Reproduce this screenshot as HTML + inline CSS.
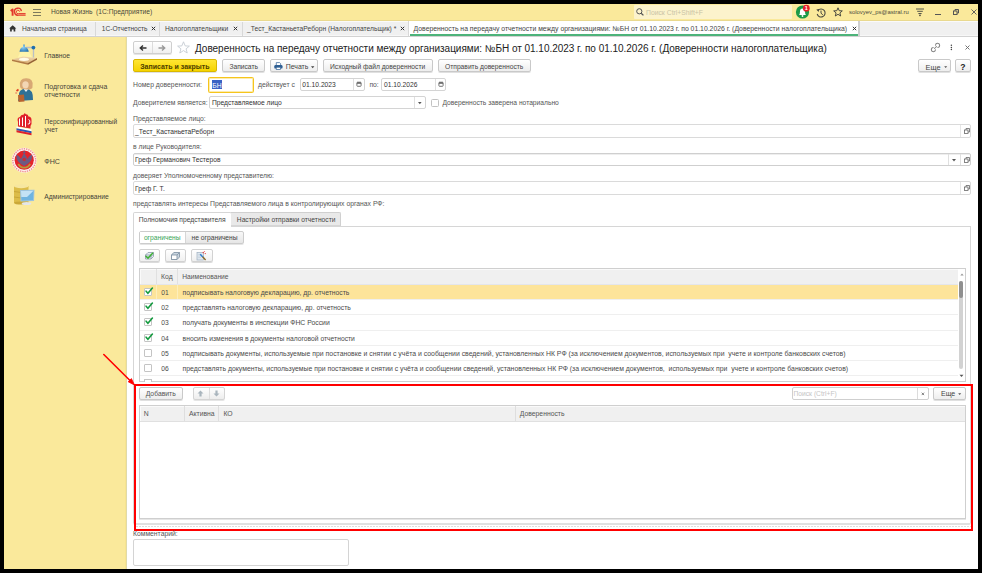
<!DOCTYPE html>
<html><head><meta charset="utf-8">
<style>
*{box-sizing:border-box;margin:0;padding:0}
html,body{width:982px;height:573px;overflow:hidden;background:#000}
body{position:relative;font-family:"Liberation Sans",sans-serif;font-size:6.7px;color:#4a4a4a}
.a{position:absolute}
.t{position:absolute;white-space:pre;line-height:1}
svg{overflow:visible}
</style></head>
<body>
<div class="a" style="left:4px;top:4px;width:974px;height:565px;background:#fff"></div>
<div class="a" style="left:4px;top:4px;width:974px;height:16px;background:#fae99b"></div>
<div class="a" style="left:4px;top:20px;width:974px;height:1px;background:#e9d98f"></div>
<div class="a" style="left:4px;top:21px;width:974px;height:15px;background:#f0f0f0"></div>
<div class="a" style="left:4px;top:21px;width:974px;height:1px;background:#fafafa"></div>
<div class="a" style="left:4px;top:35px;width:974px;height:1px;background:#f7f7f7"></div>
<div class="a" style="left:4px;top:36px;width:974px;height:1px;background:#d2d2d2"></div>
<div class="a" style="left:4px;top:37px;width:122px;height:532px;background:#fae99b"></div>
<div class="a" style="left:125px;top:37px;width:1px;height:532px;background:#f8e48e"></div>
<div class="a" style="left:126px;top:37px;width:1px;height:532px;background:#e0daa8"></div>
<svg class="a" style="left:10px;top:7px;" width="17" height="10" viewBox="0 0 17 10"><g fill="none" stroke="#e3372c" stroke-linecap="butt"><path d="M0.7 4 L2.6 2.4 V8.8" stroke-width="1.9" stroke-linejoin="round"/><path d="M11.4 4.2 A3.5 3.5 0 1 0 8.4 8.2 H15.6" stroke-width="1.3"/><path d="M9.6 4.6 A1.7 1.7 0 1 0 8.4 6.6 H15.6" stroke-width="1.0"/></g></svg>
<div class="a" style="left:33px;top:9px;width:8px;height:1px;background:#7d7a5c"></div>
<div class="a" style="left:33px;top:12px;width:8px;height:1px;background:#7d7a5c"></div>
<div class="a" style="left:33px;top:15px;width:8px;height:1px;background:#7d7a5c"></div>
<div class="t" style="left:51.00px;top:9px;font-size:6.7px;color:#4b4a3c;">Новая Жизнь  (1С:Предприятие)</div>
<div class="a" style="left:634px;top:5px;width:158px;height:14px;background:#fcf3cc;border-radius:1px"></div>
<svg class="a" style="left:636px;top:8px;" width="8" height="8" viewBox="0 0 8 8"><circle cx="3.3" cy="3.3" r="2.6" fill="none" stroke="#555" stroke-width="1"/><path d="M5.2 5.2 L7.4 7.4" stroke="#555" stroke-width="1.3"/></svg>
<div class="t" style="left:646.00px;top:10px;font-size:6.8px;color:#c9c3a6;">Поиск Ctrl+Shift+F</div>
<svg class="a" style="left:795px;top:5px;" width="16" height="14" viewBox="0 0 16 14"><circle cx="7.5" cy="7" r="6.6" fill="#1d9a48"/><path d="M4 10 Q5 9 5 6.5 Q5 3.8 7.5 3.6 Q10 3.8 10 6.5 Q10 9 11 10 Z" fill="#fff"/><circle cx="7.5" cy="11" r="0.9" fill="#fff"/><circle cx="11.3" cy="3.2" r="3.4" fill="#e8202a"/><text x="11.3" y="5.4" font-size="5.5" font-weight="bold" text-anchor="middle" fill="#fff" font-family="Liberation Sans">1</text></svg>
<svg class="a" style="left:816px;top:7.5px;" width="10" height="10" viewBox="0 0 10 10"><path d="M1.9 2.6 A4 4 0 1 1 1.2 6" fill="none" stroke="#4a4a40" stroke-width="1.1"/><path d="M0.3 1.6 L2.6 3.9 L3.2 1Z" fill="#4a4a40"/><path d="M5 2.6 V5.2 L6.8 6.8" fill="none" stroke="#4a4a40" stroke-width="1"/></svg>
<svg class="a" style="left:833px;top:7px;" width="10" height="10" viewBox="0 0 10 10"><path d="M5 0.8 L6.2 3.7 L9.3 3.9 L6.9 5.9 L7.7 9 L5 7.3 L2.3 9 L3.1 5.9 L0.7 3.9 L3.8 3.7Z" fill="none" stroke="#4a4a40" stroke-width="1" stroke-linejoin="round"/></svg>
<div class="t" style="left:849.00px;top:10px;font-size:5.9px;color:#4b4a3c;">solovyev_ps@astral.ru</div>
<svg class="a" style="left:915.5px;top:8px;" width="9" height="9" viewBox="0 0 9 9"><path d="M0 1H8M1.2 3.3H6.8M2.4 5.5H5.6" stroke="#555548" stroke-width="1"/><path d="M2.8 6.8 H5.2 L4 8.4Z" fill="#333"/></svg>
<div class="a" style="left:935px;top:14px;width:6px;height:1px;background:#555"></div>
<svg class="a" style="left:953px;top:9px;" width="6" height="6" viewBox="0 0 6 6"><rect x="0.5" y="2" width="3.5" height="3.5" fill="none" stroke="#555" stroke-width="1"/><path d="M2 2 V0.5 H5.5 V4 H4" fill="none" stroke="#555" stroke-width="1"/></svg>
<svg class="a" style="left:970.5px;top:8.5px;" width="6" height="6" viewBox="0 0 6 6"><path d="M0.5 0.5L5.5 5.5M5.5 0.5L0.5 5.5" stroke="#555" stroke-width="0.9"/></svg>
<svg class="a" style="left:9px;top:24.5px;" width="8" height="7" viewBox="0 0 8 7"><path d="M3.7 0.2 L7.3 3.5 H6.3 V6.6 H4.6 V4.6 H2.8 V6.6 H1.1 V3.5 H0.1Z" fill="#333"/></svg>
<div class="t" style="left:22.00px;top:26px;font-size:6.7px;color:#444;">Начальная страница</div>
<div class="a" style="left:95px;top:22px;width:1px;height:14px;background:#d8d8d8"></div>
<div class="t" style="left:101.80px;top:26px;font-size:6.6px;color:#444;">1С-Отчетность</div>
<svg class="a" style="left:151px;top:26px;" width="5" height="5" viewBox="0 0 5 5"><path d="M0.8 0.8L4.2 4.2M4.2 0.8L0.8 4.2" stroke="#333" stroke-width="1"/></svg>
<div class="a" style="left:159px;top:22px;width:1px;height:14px;background:#d8d8d8"></div>
<div class="t" style="left:165.00px;top:26px;font-size:6.7px;color:#444;">Налогоплательщики</div>
<svg class="a" style="left:232.5px;top:26px;" width="5" height="5" viewBox="0 0 5 5"><path d="M0.8 0.8L4.2 4.2M4.2 0.8L0.8 4.2" stroke="#333" stroke-width="1"/></svg>
<div class="a" style="left:242px;top:22px;width:1px;height:14px;background:#d8d8d8"></div>
<div class="t" style="left:247.00px;top:26px;font-size:6.7px;color:#444;">_Тест_КастаньетаРеборн (Налогоплательщик) *</div>
<svg class="a" style="left:400px;top:26px;" width="5" height="5" viewBox="0 0 5 5"><path d="M0.8 0.8L4.2 4.2M4.2 0.8L0.8 4.2" stroke="#333" stroke-width="1"/></svg>
<div class="a" style="left:408px;top:21px;width:1px;height:15px;background:#d8d8d8"></div>
<div class="a" style="left:409px;top:21px;width:449px;height:15px;background:#fff"></div>
<div class="a" style="left:410px;top:34px;width:448px;height:2px;background:#4db37a"></div>
<div class="t" style="left:413.60px;top:26px;font-size:6.83px;color:#444;">Доверенность на передачу отчетности между организациями: №БН от 01.10.2023 г. по 01.10.2026 г. (Доверенности налогоплательщика)</div>
<svg class="a" style="left:851.5px;top:26px;" width="5" height="5" viewBox="0 0 5 5"><path d="M0.8 0.8L4.2 4.2M4.2 0.8L0.8 4.2" stroke="#333" stroke-width="1"/></svg>
<div class="a" style="left:858px;top:21px;width:2px;height:15px;background:#d0d0d0"></div>
<svg class="a" style="left:8px;top:40px;" width="32" height="28" viewBox="0 0 32 28"><defs><linearGradient id="bd" x1="0" y1="0" x2="0" y2="1"><stop offset="0" stop-color="#f1d9b0"/><stop offset="1" stop-color="#d9b07a"/></linearGradient><radialGradient id="sh" cx="0.4" cy="0.4" r="0.7"><stop offset="0" stop-color="#8fd0f5"/><stop offset="1" stop-color="#1f6fae"/></radialGradient></defs><path d="M12.5 11.5 L21 11.5 L24.5 18.5 L9.5 18.5Z" fill="#fff7b0" opacity="0.8"/><path d="M4 19.5 L15 16.5 L29 18 L20 23Z" fill="url(#bd)"/><ellipse cx="16" cy="19.3" rx="5" ry="1.6" fill="#fffbe8"/><path d="M4 19.5 L20 23 L20 24.8 L4 21Z" fill="#b07a45"/><path d="M20 23 L29 18 L29 19.8 L20 24.8Z" fill="#946236"/><path d="M18 7.5 H25.5 V17.5" fill="none" stroke="#b9bfc6" stroke-width="1.3"/><circle cx="25.4" cy="7.6" r="1.9" fill="#1f6fae"/><path d="M11.5 11.8 Q12 7.5 15 7 L15.2 4.8 Q16 3.8 16.8 4.8 L17 7 Q20 7.5 20.8 11.8Z" fill="url(#sh)"/></svg>
<div class="t" style="left:44.30px;top:53px;font-size:6.75px;color:#45443a;">Главное</div>
<svg class="a" style="left:10px;top:74px;" width="30" height="28" viewBox="0 0 30 28"><path d="M9 22 Q8 15 16 14.5 Q23.5 15 23 26 L8 27Z" fill="#2f7196"/><path d="M13.5 14.8 L16 18 L18.5 14.8Z" fill="#eef6fa"/><path d="M10 12 Q9 4 16.5 4.3 Q23.5 4.5 22.5 12 Q23 14.5 21 15 Q19 16 13 15 Q10 14.5 10 12Z" fill="#d8a874"/><ellipse cx="15.5" cy="10.8" rx="3.2" ry="3.6" fill="#f3d6b4"/><path d="M8 21 L14 20.5 L14.5 27.5 L8.5 28Z" fill="#b8632f"/><path d="M6.5 17 L8.5 15.5" stroke="#e23b22" stroke-width="1.6"/><circle cx="6.2" cy="19" r="1.1" fill="#f0a070"/></svg>
<div class="t" style="left:44.30px;top:84px;font-size:6.95px;color:#45443a;">Подготовка и сдача</div>
<div class="t" style="left:44.30px;top:92px;font-size:6.95px;color:#45443a;">отчетности</div>
<svg class="a" style="left:10px;top:110px;" width="30" height="30" viewBox="0 0 30 30"><path d="M8 12 Q6.5 7.5 10 7 Q11 4.5 13.5 4.8 Q14.5 2 15.8 4.2 Q18 4 18.5 6.5 Q21.5 6.5 21.5 10 Q22 14 20.5 16 L20.5 18.5 L8 16.5Z" fill="#e0202a"/><path d="M9.5 8.5 V15.5 M12.5 7.5 V16 M15.5 6 V16.8 M18.5 9.5 Q20.5 10 19.8 13 Q19 14.5 17.8 14" fill="none" stroke="#fff" stroke-width="1"/><path d="M6.5 16.5 L21.5 19.5 L21.5 21.3 L6.5 18.3Z" fill="#fff"/><path d="M6.5 18.3 L21.5 21.3 L21.5 23.2 L6.5 20.2Z" fill="#2a57b6"/><path d="M6.5 20.2 L21.5 23.2 L21.5 25.3 L6.5 22.3Z" fill="#e0202a"/></svg>
<div class="t" style="left:44.60px;top:119px;font-size:6.55px;color:#45443a;">Персонифицированный</div>
<div class="t" style="left:44.60px;top:127px;font-size:6.55px;color:#45443a;">учет</div>
<svg class="a" style="left:8px;top:144px;" width="32" height="32" viewBox="0 0 32 32"><circle cx="16.2" cy="16.2" r="12.4" fill="#fdf3f3"/><circle cx="16.2" cy="16.2" r="11.4" fill="none" stroke="#ef8c8c" stroke-width="1.4" stroke-dasharray="1.4 0.9"/><circle cx="16.2" cy="16.2" r="9.6" fill="#e4242a"/><path d="M8.2 10.5 Q11.5 11.5 13 15 L16.2 8.5 L19.4 15 Q20.9 11.5 24.2 10.5 Q24.2 17.5 19.5 20 L16.2 22 L12.9 20 Q8.2 17.5 8.2 10.5Z" fill="#6d5a82"/><path d="M14.6 9 L16.2 6.6 L17.8 9Z" fill="#6d5a82"/><circle cx="16.2" cy="15.5" r="1.8" fill="#c0303a"/><path d="M10.2 20 Q13 24.5 16.2 23.5 Q19.4 24.5 22.2 20" fill="none" stroke="#b49a3c" stroke-width="1.8"/></svg>
<div class="t" style="left:44.30px;top:159px;font-size:7.1px;color:#45443a;">ФНС</div>
<svg class="a" style="left:8px;top:180px;" width="32" height="30" viewBox="0 0 32 30"><rect x="6" y="6" width="14.5" height="17" fill="#dcbc48"/><ellipse cx="13.2" cy="6.2" rx="7.2" ry="2" fill="#f6e6a0"/><ellipse cx="13.2" cy="23" rx="7.2" ry="1.6" fill="#caa838"/><path d="M6 11.5 Q13 13.5 20.5 11.5 M6 17 Q13 19 20.5 17" stroke="#bf9c30" stroke-width="0.7" fill="none"/><path d="M12 10 L26.5 9.8 L26 21 L12.5 21.5Z" fill="#9fc4dc"/><path d="M13 11 L25.5 10.8 L25 20 L13.5 20.5Z" fill="#6fb4e0"/><path d="M13 11 L25.5 10.8 L19 17 L13.3 17Z" fill="#d8eefa" opacity="0.8"/><ellipse cx="18.5" cy="23.5" rx="4.8" ry="1.6" fill="#e4e6e8"/></svg>
<div class="t" style="left:44.30px;top:194px;font-size:6.75px;color:#45443a;">Администрирование</div>
<div class="a" style="left:133px;top:41px;width:39px;height:13px;background:linear-gradient(#fff,#f0f0f0);border:1px solid #cfcfcf;border-radius:2px;box-shadow:0 1px 0 rgba(0,0,0,0.1)"></div>
<div class="a" style="left:152px;top:42px;width:1px;height:11px;background:#dcdcdc"></div>
<svg class="a" style="left:139px;top:45px;" width="8" height="6" viewBox="0 0 8 6"><path d="M7.5 3H2M4 0.6L1.3 3L4 5.4" fill="none" stroke="#333" stroke-width="1.4"/></svg>
<svg class="a" style="left:158px;top:45px;" width="8" height="6" viewBox="0 0 8 6"><path d="M0.5 3H6M4 0.6L6.7 3L4 5.4" fill="none" stroke="#999" stroke-width="1.4"/></svg>
<svg class="a" style="left:177px;top:41px;" width="13" height="13" viewBox="0 0 13 13"><path d="M6.5 0.8 L8.2 4.9 L12.4 5.1 L9.1 7.8 L10.2 12 L6.5 9.6 L2.8 12 L3.9 7.8 L0.6 5.1 L4.8 4.9Z" fill="none" stroke="#c5ccd3" stroke-width="0.9" stroke-linejoin="round"/></svg>
<div class="t" style="left:195.00px;top:44px;font-size:10px;color:#222;letter-spacing:-0.025px">Доверенность на передачу отчетности между организациями: №БН от 01.10.2023 г. по 01.10.2026 г. (Доверенности налогоплательщика)</div>
<svg class="a" style="left:930px;top:42px;" width="11" height="11" viewBox="0 0 11 11"><g fill="none" stroke="#808080" stroke-width="1.05" stroke-linecap="round"><path d="M5.5 3.2 A2.1 2.1 0 1 1 7.8 5.5"/><path d="M5.5 7.8 A2.1 2.1 0 1 1 3.2 5.5"/><path d="M4.5 6.5 L6.5 4.5"/></g></svg>
<svg class="a" style="left:950px;top:44px;" width="3" height="7" viewBox="0 0 3 7"><circle cx="1.4" cy="1.2" r="0.75" fill="#444"/><circle cx="1.4" cy="3.4" r="0.75" fill="#444"/><circle cx="1.4" cy="5.6" r="0.75" fill="#444"/></svg>
<svg class="a" style="left:965px;top:45px;" width="5" height="5" viewBox="0 0 5 5"><path d="M0.5 0.5L4.5 4.5M4.5 0.5L0.5 4.5" stroke="#666" stroke-width="0.9"/></svg>
<div class="a" style="left:133px;top:59px;width:84px;height:13px;background:linear-gradient(#ffe633,#f5d300);border:1px solid #d9b800;border-radius:2px;box-shadow:0 1px 0 rgba(0,0,0,0.12)"></div>
<div class="t" style="left:140.20px;top:63px;font-size:7.0px;color:#4d4000;font-weight:bold;">Записать и закрыть</div>
<div class="a" style="left:222px;top:59px;width:43px;height:13px;background:linear-gradient(#ffffff,#eeeeee);border:1px solid #c9c9c9;border-radius:2px;box-shadow:0 1px 0 rgba(0,0,0,0.12)"></div>
<div class="t" style="left:229.40px;top:64px;font-size:6.7px;color:#444;">Записать</div>
<div class="a" style="left:270px;top:59px;width:48px;height:13px;background:linear-gradient(#ffffff,#eeeeee);border:1px solid #c9c9c9;border-radius:2px;box-shadow:0 1px 0 rgba(0,0,0,0.12)"></div>
<div class="t" style="left:285.80px;top:64px;font-size:6.9px;color:#444;">Печать</div>
<svg class="a" style="left:274px;top:62px;" width="9" height="8" viewBox="0 0 9 8"><path d="M2.3 3 V0.6 H5.6 L6.6 1.6 V3" fill="#fff" stroke="#2f5f93" stroke-width="0.7"/><rect x="0.3" y="3" width="8.2" height="3.6" rx="1.2" fill="#2f5f93"/><rect x="2.2" y="5.2" width="4.4" height="2.4" fill="#fff" stroke="#2f5f93" stroke-width="0.7"/></svg>
<svg class="a" style="left:311px;top:66px;" width="4" height="3" viewBox="0 0 4 3"><path d="M0 0.2H3.4L1.7 2.2Z" fill="#444"/></svg>
<div class="a" style="left:323px;top:59px;width:110px;height:13px;background:linear-gradient(#ffffff,#eeeeee);border:1px solid #c9c9c9;border-radius:2px;box-shadow:0 1px 0 rgba(0,0,0,0.12)"></div>
<div class="t" style="left:330.00px;top:64px;font-size:6.7px;color:#444;">Исходный файл доверенности</div>
<div class="a" style="left:438px;top:59px;width:93px;height:13px;background:linear-gradient(#ffffff,#eeeeee);border:1px solid #c9c9c9;border-radius:2px;box-shadow:0 1px 0 rgba(0,0,0,0.12)"></div>
<div class="t" style="left:445.00px;top:64px;font-size:6.7px;color:#444;">Отправить доверенность</div>
<div class="a" style="left:918px;top:59px;width:33px;height:13px;background:linear-gradient(#ffffff,#eeeeee);border:1px solid #c9c9c9;border-radius:2px;box-shadow:0 1px 0 rgba(0,0,0,0.12)"></div>
<div class="t" style="left:925.50px;top:64px;font-size:7.4px;color:#444;">Еще</div>
<svg class="a" style="left:944px;top:66px;" width="4" height="3" viewBox="0 0 4 3"><path d="M0.2 0.3H3.2L1.7 2Z" fill="#555"/></svg>
<div class="a" style="left:955px;top:59px;width:16px;height:13px;background:linear-gradient(#ffffff,#eeeeee);border:1px solid #c9c9c9;border-radius:2px;box-shadow:0 1px 0 rgba(0,0,0,0.12)"></div>
<div class="t" style="left:960.20px;top:63px;font-size:8.6px;color:#222;font-weight:bold;">?</div>
<div class="t" style="left:133.00px;top:82px;font-size:6.8px;color:#555;">Номер доверенности:</div>
<div class="a" style="left:208px;top:77px;width:46px;height:16px;background:#fff;border:1px solid #f6c51c;border-radius:1.5px;box-shadow:inset 0 0 0 0.5px #f9d860"></div>
<div class="a" style="left:212px;top:80px;width:10px;height:9px;background:#3a62c4"></div>
<div class="t" style="left:212.20px;top:83px;font-size:6.8px;color:#fff;">БН</div>
<div class="t" style="left:258.00px;top:82px;font-size:6.8px;color:#555;">действует с</div>
<div class="a" style="left:300px;top:78px;width:65px;height:13px;background:#fff;border:1px solid #d4d4d4;border-radius:2px"></div>
<div class="a" style="left:353px;top:79px;width:1px;height:11px;background:#e0e0e0"></div>
<div class="t" style="left:302.30px;top:82px;font-size:6.7px;color:#333;">01.10.2023</div>
<svg class="a" style="left:356px;top:81px;" width="6" height="6" viewBox="0 0 6 6"><rect x="0.9" y="1.4" width="4.2" height="3.9" rx="0.6" fill="#fff" stroke="#666" stroke-width="0.9"/><rect x="0.9" y="1.4" width="4.2" height="1.4" fill="#666"/><path d="M2 0.4V1.4M4 0.4V1.4" stroke="#666" stroke-width="0.6"/></svg>
<div class="t" style="left:369.40px;top:82px;font-size:6.8px;color:#555;">по:</div>
<div class="a" style="left:381px;top:78px;width:65px;height:13px;background:#fff;border:1px solid #d4d4d4;border-radius:2px"></div>
<div class="a" style="left:435px;top:79px;width:1px;height:11px;background:#e0e0e0"></div>
<div class="t" style="left:384.00px;top:82px;font-size:6.7px;color:#333;">01.10.2026</div>
<svg class="a" style="left:438px;top:81px;" width="6" height="6" viewBox="0 0 6 6"><rect x="0.9" y="1.4" width="4.2" height="3.9" rx="0.6" fill="#fff" stroke="#666" stroke-width="0.9"/><rect x="0.9" y="1.4" width="4.2" height="1.4" fill="#666"/><path d="M2 0.4V1.4M4 0.4V1.4" stroke="#666" stroke-width="0.6"/></svg>
<div class="t" style="left:133.00px;top:100px;font-size:6.8px;color:#555;">Доверителем является:</div>
<div class="a" style="left:209px;top:96px;width:217px;height:13px;background:#fff;border:1px solid #d4d4d4;border-radius:2px"></div>
<div class="a" style="left:414px;top:97px;width:1px;height:11px;background:#e0e0e0"></div>
<div class="t" style="left:212.00px;top:100px;font-size:6.7px;color:#333;">Представляемое лицо</div>
<svg class="a" style="left:418px;top:102px;" width="4" height="3" viewBox="0 0 4 3"><path d="M0 0H3.6L1.8 2.2Z" fill="#555"/></svg>
<div class="a" style="left:431px;top:99px;width:8px;height:8px;background:#fff;border:1px solid #c2c2c2;border-radius:1.5px"></div>
<div class="t" style="left:442.40px;top:100px;font-size:6.7px;color:#555;">Доверенность заверена нотариально</div>
<div class="t" style="left:133.00px;top:116px;font-size:6.8px;color:#555;">Представляемое лицо:</div>
<div class="a" style="left:133px;top:124px;width:838px;height:14px;background:#fff;border:1px solid #dadada;border-radius:2px"></div>
<div class="a" style="left:960px;top:125px;width:1px;height:12px;background:#e6e6e6"></div>
<div class="t" style="left:135.00px;top:129px;font-size:6.7px;color:#333;">_Тест_КастаньетаРеборн</div>
<svg class="a" style="left:963.5px;top:127.5px;" width="6" height="6" viewBox="0 0 6 6"><rect x="0.5" y="2" width="3.5" height="3.5" fill="none" stroke="#666" stroke-width="0.8"/><path d="M2 2 V0.5 H5.5 V4 H4" fill="none" stroke="#666" stroke-width="0.8"/></svg>
<div class="t" style="left:133.00px;top:144px;font-size:6.8px;color:#555;">в лице Руководителя:</div>
<div class="a" style="left:133px;top:153px;width:838px;height:13px;background:#fff;border:1px solid #cfcfcf;border-radius:2px;box-shadow:inset 0 1px 0 #eee"></div>
<div class="a" style="left:948px;top:154px;width:1px;height:11px;background:#e0e0e0"></div>
<div class="a" style="left:960px;top:154px;width:1px;height:11px;background:#e0e0e0"></div>
<div class="t" style="left:135.00px;top:157px;font-size:6.7px;color:#333;">Греф Германович Тестеров</div>
<svg class="a" style="left:952px;top:159px;" width="5" height="3" viewBox="0 0 5 3"><path d="M0 0H4L2 2.4Z" fill="#555"/></svg>
<svg class="a" style="left:963.5px;top:156.5px;" width="6" height="6" viewBox="0 0 6 6"><rect x="0.5" y="2" width="3.5" height="3.5" fill="none" stroke="#666" stroke-width="0.8"/><path d="M2 2 V0.5 H5.5 V4 H4" fill="none" stroke="#666" stroke-width="0.8"/></svg>
<div class="t" style="left:133.00px;top:173px;font-size:6.8px;color:#555;">доверяет Уполномоченному представителю:</div>
<div class="a" style="left:133px;top:181px;width:838px;height:14px;background:#fff;border:1px solid #dadada;border-radius:2px"></div>
<div class="a" style="left:960px;top:182px;width:1px;height:12px;background:#e6e6e6"></div>
<div class="t" style="left:135.00px;top:186px;font-size:6.7px;color:#333;">Греф Г. Т.</div>
<svg class="a" style="left:963.5px;top:184.5px;" width="6" height="6" viewBox="0 0 6 6"><rect x="0.5" y="2" width="3.5" height="3.5" fill="none" stroke="#666" stroke-width="0.8"/><path d="M2 2 V0.5 H5.5 V4 H4" fill="none" stroke="#666" stroke-width="0.8"/></svg>
<div class="t" style="left:133.00px;top:201px;font-size:6.8px;color:#555;">представлять интересы Представляемого лица в контролирующих органах РФ:</div>
<div class="a" style="left:133px;top:226px;width:838px;height:299px;border:1px solid #d6d6d6;border-bottom:2px solid #e0e0e0;border-radius:0 0 2px 2px;background:#fff"></div>
<div class="a" style="left:133px;top:212px;width:99px;height:15px;background:#fff;border:1px solid #d6d6d6;border-bottom:none;border-radius:2px 2px 0 0"></div>
<div class="t" style="left:138.80px;top:217px;font-size:6.7px;color:#444;">Полномочия представителя</div>
<div class="a" style="left:231px;top:212px;width:110px;height:14px;background:#e9e9e9;border:1px solid #d0d0d0;border-bottom:1px solid #d6d6d6;border-left:none;border-radius:0 2px 0 0"></div>
<div class="t" style="left:236.80px;top:217px;font-size:6.7px;color:#444;">Настройки отправки отчетности</div>
<div class="a" style="left:139px;top:231px;width:105px;height:13px;background:linear-gradient(#f8f8f8,#e6e6e6);border:1px solid #cccccc;border-radius:2px;box-shadow:0 1px 0 rgba(0,0,0,0.1)"></div>
<div class="a" style="left:140px;top:232px;width:45px;height:11px;background:#fff"></div>
<div class="a" style="left:185px;top:232px;width:1px;height:11px;background:#d6d6d6"></div>
<div class="t" style="left:143.90px;top:235px;font-size:6.7px;color:#38a558;">ограничены</div>
<div class="t" style="left:191.60px;top:235px;font-size:6.7px;color:#444;">не ограничены</div>
<div class="a" style="left:139px;top:249px;width:21px;height:13px;background:linear-gradient(#fff,#f0f0f0);border:1px solid #d2d2d2;border-radius:2px;box-shadow:0 1px 0 rgba(0,0,0,0.14)"></div>
<div class="a" style="left:165px;top:249px;width:21px;height:13px;background:linear-gradient(#fff,#f0f0f0);border:1px solid #d2d2d2;border-radius:2px;box-shadow:0 1px 0 rgba(0,0,0,0.14)"></div>
<div class="a" style="left:191px;top:249px;width:22px;height:13px;background:linear-gradient(#fff,#f0f0f0);border:1px solid #d2d2d2;border-radius:2px;box-shadow:0 1px 0 rgba(0,0,0,0.14)"></div>
<svg class="a" style="left:144px;top:251px;" width="11" height="10" viewBox="0 0 11 10"><g stroke="#8c9bab" stroke-width="0.8" stroke-linejoin="round"><path d="M1.5 4 L4 1.5 H9.5 V5.5 L7 8 H1.5Z" fill="#e6edf3"/><path d="M1.5 4 H7 L9.5 1.5 M7 4 V8" fill="none"/><path d="M1.5 5.8 H7 L9.5 3.3" fill="none" stroke-width="0.6"/></g><path d="M2 5.2 L4 7.2 L8.6 2.2" fill="none" stroke="#3cb030" stroke-width="1.5" stroke-linecap="round"/></svg>
<svg class="a" style="left:170px;top:251px;" width="11" height="10" viewBox="0 0 11 10"><g stroke="#7f92a4" stroke-width="0.85" stroke-linejoin="round"><path d="M1.5 4 L3.8 1.5 H9.5 V6 L7 8.5 H1.5Z" fill="#c9d5e0"/><path d="M1.5 4 H7 V8.5 H1.5Z" fill="#fff"/><path d="M7 4 L9.5 1.5" fill="none"/></g></svg>
<svg class="a" style="left:196px;top:251px;" width="12" height="11" viewBox="0 0 12 11"><rect x="1" y="1.5" width="6.5" height="7.5" fill="#dfe7ef" stroke="#9fb0c0" stroke-width="0.7"/><path d="M2.2 3.5H6M2.2 5H6M2.2 6.5H5" stroke="#b8c6d3" stroke-width="0.5"/><path d="M4.2 3.2 L6.8 6" stroke="#2f7fd0" stroke-width="1.4"/><path d="M6.6 5.8 L9.6 9" stroke="#8a6a2a" stroke-width="1.4"/><circle cx="7.3" cy="1.6" r="0.8" fill="#e85050"/><circle cx="9.3" cy="2.6" r="0.7" fill="#e85050"/><circle cx="8.6" cy="0.6" r="0.5" fill="#e85050"/></svg>
<div class="a" style="left:139px;top:268px;width:827px;height:114px;border:1px solid #cfcfcf;background:#fff"></div>
<div class="a" style="left:140px;top:269px;width:818px;height:16px;background:#f0f0f0;border-top:1px solid #fafafa;border-left:1px solid #fafafa"></div>
<div class="a" style="left:140px;top:284px;width:818px;height:1px;background:#e4e6ec"></div>
<div class="a" style="left:156px;top:269px;width:1px;height:15px;background:#e0e0e0"></div>
<div class="a" style="left:177px;top:269px;width:1px;height:15px;background:#e0e0e0"></div>
<div class="t" style="left:161.10px;top:274px;font-size:6.8px;color:#555;">Код</div>
<div class="t" style="left:182.30px;top:274px;font-size:6.68px;color:#555;">Наименование</div>
<div class="a" style="left:140px;top:285px;width:818px;height:14px;background:#fde49a"></div>
<div class="a" style="left:156px;top:285px;width:1px;height:14px;background:#fdeebb"></div>
<div class="a" style="left:177px;top:285px;width:1px;height:14px;background:#fdeebb"></div>
<div class="a" style="left:144px;top:288px;width:8px;height:8px;background:#fff;border:1px solid #c4c4c4;border-radius:1px"></div>
<svg class="a" style="left:145px;top:286px;" width="9" height="9" viewBox="0 0 9 9"><path d="M1.1 5.2 L2.9 7.2 L7.4 2" fill="none" stroke="#139a3e" stroke-width="1.6" stroke-linecap="round"/></svg>
<div class="t" style="left:161.30px;top:290px;font-size:6.7px;color:#4a4a4a;">01</div>
<div class="t" style="left:182.60px;top:290px;font-size:6.8px;color:#4a4a4a;">подписывать налоговую декларацию, др. отчетность</div>
<div class="a" style="left:140px;top:299px;width:818px;height:1px;background:#efefef"></div>
<div class="a" style="left:144px;top:303px;width:8px;height:8px;background:#fff;border:1px solid #c4c4c4;border-radius:1px"></div>
<svg class="a" style="left:145px;top:301px;" width="9" height="9" viewBox="0 0 9 9"><path d="M1.1 5.2 L2.9 7.2 L7.4 2" fill="none" stroke="#139a3e" stroke-width="1.6" stroke-linecap="round"/></svg>
<div class="t" style="left:161.30px;top:305px;font-size:6.7px;color:#4a4a4a;">02</div>
<div class="t" style="left:182.60px;top:305px;font-size:6.77px;color:#4a4a4a;">представлять налоговую декларацию, др. отчетность</div>
<div class="a" style="left:140px;top:314px;width:818px;height:1px;background:#efefef"></div>
<div class="a" style="left:144px;top:318px;width:8px;height:8px;background:#fff;border:1px solid #c4c4c4;border-radius:1px"></div>
<svg class="a" style="left:145px;top:316px;" width="9" height="9" viewBox="0 0 9 9"><path d="M1.1 5.2 L2.9 7.2 L7.4 2" fill="none" stroke="#139a3e" stroke-width="1.6" stroke-linecap="round"/></svg>
<div class="t" style="left:161.30px;top:320px;font-size:6.7px;color:#4a4a4a;">03</div>
<div class="t" style="left:182.60px;top:320px;font-size:6.85px;color:#4a4a4a;">получать документы в инспекции ФНС России</div>
<div class="a" style="left:140px;top:330px;width:818px;height:1px;background:#efefef"></div>
<div class="a" style="left:144px;top:334px;width:8px;height:8px;background:#fff;border:1px solid #c4c4c4;border-radius:1px"></div>
<svg class="a" style="left:145px;top:332px;" width="9" height="9" viewBox="0 0 9 9"><path d="M1.1 5.2 L2.9 7.2 L7.4 2" fill="none" stroke="#139a3e" stroke-width="1.6" stroke-linecap="round"/></svg>
<div class="t" style="left:161.30px;top:336px;font-size:6.7px;color:#4a4a4a;">04</div>
<div class="t" style="left:182.60px;top:336px;font-size:6.74px;color:#4a4a4a;">вносить изменения в документы налоговой отчетности</div>
<div class="a" style="left:140px;top:345px;width:818px;height:1px;background:#efefef"></div>
<div class="a" style="left:144px;top:349px;width:8px;height:8px;background:#fff;border:1px solid #c4c4c4;border-radius:1px"></div>
<div class="t" style="left:161.30px;top:351px;font-size:6.7px;color:#4a4a4a;">05</div>
<div class="t" style="left:182.60px;top:351px;font-size:6.88px;color:#4a4a4a;">подписывать документы, используемые при постановке и снятии с учёта и сообщении сведений, установленных НК РФ (за исключением документов, используемых при  учете и контроле банковских счетов)</div>
<div class="a" style="left:140px;top:360px;width:818px;height:1px;background:#efefef"></div>
<div class="a" style="left:144px;top:364px;width:8px;height:8px;background:#fff;border:1px solid #c4c4c4;border-radius:1px"></div>
<div class="t" style="left:161.30px;top:366px;font-size:6.7px;color:#4a4a4a;">06</div>
<div class="t" style="left:182.60px;top:366px;font-size:6.87px;color:#4a4a4a;">представлять документы, используемые при постановке и снятии с учёта и сообщении сведений, установленных НК РФ (за исключением документов,  используемых при  учете и контроле банковских счетов)</div>
<div class="a" style="left:140px;top:375px;width:818px;height:1px;background:#efefef"></div>
<div class="a" style="left:144px;top:379px;width:8px;height:3px;background:#fff;border:1px solid #c4c4c4;border-bottom:none"></div>
<div class="a" style="left:959px;top:281px;width:4px;height:88px;background:#d2d2d2;border-radius:2px"></div>
<div class="a" style="left:959px;top:281px;width:4px;height:17px;background:#8f8f8f;border-radius:2px"></div>
<svg class="a" style="left:959.5px;top:272.5px;" width="4" height="3" viewBox="0 0 4 3"><path d="M0.3 2.4 L2 0.6 L3.7 2.4Z" fill="#999"/></svg>
<svg class="a" style="left:959px;top:374px;" width="5" height="4" viewBox="0 0 5 4"><path d="M0.5 0.8 L2.5 3 L4.5 0.8Z" fill="#555"/></svg>
<div class="a" style="left:139px;top:387px;width:44px;height:13px;background:linear-gradient(#ffffff,#eeeeee);border:1px solid #c9c9c9;border-radius:2px;box-shadow:0 1px 0 rgba(0,0,0,0.12)"></div>
<div class="t" style="left:145.70px;top:391px;font-size:6.8px;color:#555;">Добавить</div>
<div class="a" style="left:193px;top:387px;width:32px;height:13px;background:linear-gradient(#fff,#ededed);border:1px solid #d4d4d4;border-radius:2px;box-shadow:0 1px 0 rgba(0,0,0,0.1)"></div>
<div class="a" style="left:209px;top:388px;width:1px;height:11px;background:#dedede"></div>
<svg class="a" style="left:197px;top:390px;" width="7" height="7" viewBox="0 0 7 7"><path d="M3.5 0.5 L6.5 3.5 H4.6 V6.5 H2.4 V3.5 H0.5Z" fill="#a9b5bd"/></svg>
<svg class="a" style="left:213px;top:390px;" width="7" height="7" viewBox="0 0 7 7"><path d="M3.5 6.5 L6.5 3.5 H4.6 V0.5 H2.4 V3.5 H0.5Z" fill="#a9b5bd"/></svg>
<div class="a" style="left:792px;top:387px;width:137px;height:13px;background:#fff;border:1px solid #cfcfcf;border-radius:2px"></div>
<div class="a" style="left:917px;top:388px;width:1px;height:11px;background:#dcdcdc"></div>
<div class="t" style="left:793.50px;top:391px;font-size:6.7px;color:#c4c4c4;">Поиск (Ctrl+F)</div>
<svg class="a" style="left:920.5px;top:391.5px;" width="4" height="4" viewBox="0 0 4 4"><path d="M0.7 0.7L3.1 3.1M3.1 0.7L0.7 3.1" stroke="#666" stroke-width="0.8"/></svg>
<div class="a" style="left:933px;top:387px;width:33px;height:13px;background:linear-gradient(#ffffff,#eeeeee);border:1px solid #c9c9c9;border-radius:2px;box-shadow:0 1px 0 rgba(0,0,0,0.12)"></div>
<div class="t" style="left:941.00px;top:390px;font-size:7.0px;color:#444;">Еще</div>
<svg class="a" style="left:958px;top:393px;" width="4" height="3" viewBox="0 0 4 3"><path d="M0.2 0.3H3.2L1.7 2Z" fill="#555"/></svg>
<div class="a" style="left:139px;top:405px;width:827px;height:114px;border:1px solid #cfcfcf;background:#fff;box-shadow:0 1px 0 #e6e6e6"></div>
<div class="a" style="left:140px;top:406px;width:825px;height:15px;background:#f0f0f0;border-top:1px solid #fafafa;border-left:1px solid #fafafa"></div>
<div class="a" style="left:140px;top:421px;width:825px;height:1px;background:#e0e0e0"></div>
<div class="a" style="left:184px;top:406px;width:1px;height:15px;background:#dedede"></div>
<div class="a" style="left:218px;top:406px;width:1px;height:15px;background:#dedede"></div>
<div class="a" style="left:515px;top:406px;width:1px;height:15px;background:#dedede"></div>
<div class="t" style="left:143.70px;top:411px;font-size:6.8px;color:#555;">N</div>
<div class="t" style="left:189.00px;top:411px;font-size:6.8px;color:#555;">Активна</div>
<div class="t" style="left:223.40px;top:411px;font-size:6.8px;color:#555;">КО</div>
<div class="t" style="left:519.80px;top:411px;font-size:6.8px;color:#555;">Доверенность</div>
<div class="a" style="left:136px;top:526px;width:835px;height:1px;background:repeating-linear-gradient(90deg,#dedede 0 2px,transparent 2px 3px)"></div>
<div class="a" style="left:134px;top:384px;width:839px;height:147px;border:2px solid #ff0000"></div>
<svg class="a" style="left:100px;top:350px;" width="40" height="40" viewBox="0 0 40 40"><path d="M3.8 4.5 L31.5 32" stroke="#ff0000" stroke-width="1.6" stroke-linecap="round"/><path d="M34.5 35 L28.2 31.8 L31.4 28.6Z" fill="#ff0000" stroke="#ff0000" stroke-width="0.8"/></svg>
<div class="t" style="left:133.00px;top:531px;font-size:6.8px;color:#555;">Комментарий:</div>
<div class="a" style="left:133px;top:539px;width:216px;height:27px;border:1px solid #d4d4d4;border-radius:2px;background:#fff"></div>
</body></html>
